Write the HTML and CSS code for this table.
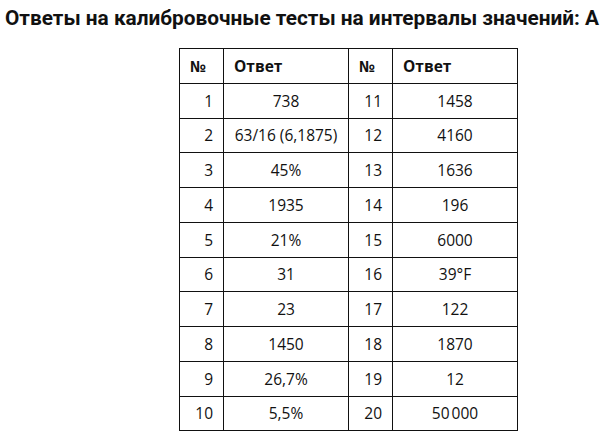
FILE: index.html
```html
<!DOCTYPE html>
<html lang="ru">
<head>
<meta charset="utf-8">
<link rel="stylesheet" href="styles.css">
</head>
<body>
<h1 class="title">Ответы на калибровочные тесты на интервалы значений: А</h1>
<table class="answers">
<thead>
<tr><th class="num">№</th><th class="ans">Ответ</th><th class="num">№</th><th class="ans">Ответ</th></tr>
</thead>
<tbody>
<tr><td class="num">1</td><td class="ans">738</td><td class="num">11</td><td class="ans">1458</td></tr>
<tr><td class="num">2</td><td class="ans">63/16 (6,1875)</td><td class="num">12</td><td class="ans">4160</td></tr>
<tr><td class="num">3</td><td class="ans">45%</td><td class="num">13</td><td class="ans">1636</td></tr>
<tr><td class="num">4</td><td class="ans">1935</td><td class="num">14</td><td class="ans">196</td></tr>
<tr><td class="num">5</td><td class="ans">21%</td><td class="num">15</td><td class="ans">6000</td></tr>
<tr><td class="num">6</td><td class="ans">31</td><td class="num">16</td><td class="ans">39°F</td></tr>
<tr><td class="num">7</td><td class="ans">23</td><td class="num">17</td><td class="ans">122</td></tr>
<tr><td class="num">8</td><td class="ans">1450</td><td class="num">18</td><td class="ans">1870</td></tr>
<tr><td class="num">9</td><td class="ans">26,7%</td><td class="num">19</td><td class="ans">12</td></tr>
<tr><td class="num">10</td><td class="ans">5,5%</td><td class="num">20</td><td class="ans">50&#8239;000</td></tr>
</tbody>
</table>
</body>
</html>
```
FILE: styles.css
```css
html, body {
  margin: 0;
  padding: 0;
  background: #fff;
}
body {
  width: 609px;
  height: 442px;
  overflow: hidden;
}
.title {
  margin: 0;
  padding: 6px 0 0 5px;
  font-family: Roboto, "Liberation Sans", sans-serif;
  font-weight: bold;
  font-size: 20.8px;
  line-height: 25px;
  color: #111;
  white-space: nowrap;
}
.answers {
  margin: 17px 0 0 179px;
  border-collapse: collapse;
  font-family: "Open Sans", sans-serif;
  font-size: 15.5px;
  color: #111;
}
.answers th, .answers td {
  border: 1.5px solid #111;
  height: 34.75px;
  padding: 0 10px;
  box-sizing: border-box;
}
.answers th {
  font-weight: bold;
  text-align: left;
}
.answers th.num, .answers td.num { width: 44px; }
.answers th.ans, .answers td.ans { width: 125px; }
.answers td.num { text-align: right; }
.answers td.ans { text-align: center; }
```
